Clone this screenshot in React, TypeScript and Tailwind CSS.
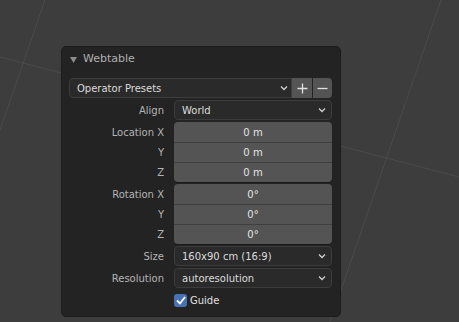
const font = { fontFamily: '"DejaVu Sans", "Liberation Sans", sans-serif' };

function Chevron() {
  return (
    <svg width="8" height="6" viewBox="0 0 8 6" className="shrink-0">
      <path d="M1 1.5 L4 4.5 L7 1.5" fill="none" stroke="#d0d0d0" strokeWidth="1.3" />
    </svg>
  );
}

function Select({ value }: { value: string }) {
  return (
    <div className="flex h-[20px] w-full items-center justify-between rounded-[4px] border border-[#3c3c3c] bg-[#2a2a2a] pl-[7px] pr-[5px] text-[#dcdcdc]">
      <span>{value}</span>
      <Chevron />
    </div>
  );
}

function Row({ label, children }: { label: string; children: React.ReactNode }) {
  return (
    <div className="flex h-[20px] items-center">
      <div className="w-[96px] shrink-0 pr-[1px] text-right text-[#b4b4b4]">{label}</div>
      <div className="ml-[9px] flex-1">{children}</div>
    </div>
  );
}

function NumberBlock({ label, values }: { label: string; values: string[] }) {
  const axes = [label, "Y", "Z"];
  return (
    <div className="flex">
      <div className="w-[96px] shrink-0 pr-[1px] text-right text-[#b4b4b4]">
        {axes.map((a) => (
          <div key={a} className="flex h-[20px] items-center justify-end">
            {a}
          </div>
        ))}
      </div>
      <div className="ml-[9px] flex-1 overflow-hidden rounded-[4px] bg-[#545454] shadow-[0_1px_0_#1a1a1a]">
        {values.map((v, i) => (
          <div
            key={i}
            className={`flex h-[20px] items-center justify-center text-[#e4e4e4] ${i > 0 ? "border-t border-[#3f3f3f]" : ""}`}
          >
            {v}
          </div>
        ))}
      </div>
    </div>
  );
}

export default function App() {
  return (
    <div className="relative h-[322px] w-[459px] overflow-hidden bg-[#3d3d3d] text-[10px]" style={font}>
      {/* viewport grid */}
      <svg className="absolute inset-0" width="459" height="322">
        <line x1="45" y1="0" x2="0" y2="130" stroke="#4b4b4b" strokeWidth="1" />
        <line x1="0" y1="57" x2="459" y2="177" stroke="#4b4b4b" strokeWidth="1" />
        <line x1="441" y1="0" x2="330" y2="322" stroke="#4b4b4b" strokeWidth="1" />
      </svg>

      <div className="absolute left-[61px] top-[46px] flex h-[271px] w-[280px] flex-col rounded-[5px] border border-[#1c1c1c] bg-[#232323] pl-[7px] pr-[8px]">
        <div className="flex h-[25px] items-center">
          <svg width="7" height="6" viewBox="0 0 7 6" className="ml-[1px]">
            <path d="M0 0 L7 0 L3.5 6 Z" fill="#8c8c8c" />
          </svg>
          <span className="ml-[6px] text-[11px] text-[#b0b0b0]">Webtable</span>
        </div>

        <div className="mt-[6px] flex h-[20px]">
          <div className="flex flex-1 items-center justify-between rounded-l-[4px] border border-[#3c3c3c] bg-[#2a2a2a] pl-[7px] pr-[3px] text-[#dcdcdc]">
            <span>Operator Presets</span>
            <Chevron />
          </div>
          <div className="flex w-[20px] items-center justify-center bg-[#545454]">
            <svg width="11" height="11" viewBox="0 0 11 11">
              <path d="M5.5 0.5 V10.5 M0.5 5.5 H10.5" stroke="#e0e0e0" strokeWidth="1.3" />
            </svg>
          </div>
          <div className="ml-[1px] flex w-[19px] items-center justify-center rounded-r-[4px] bg-[#545454]">
            <svg width="11" height="11" viewBox="0 0 11 11">
              <path d="M0.5 5.5 H10.5" stroke="#e0e0e0" strokeWidth="1.3" />
            </svg>
          </div>
        </div>

        <div className="mt-[2px] flex flex-col gap-[2px]">
          <Row label="Align">
            <Select value="World" />
          </Row>
          <NumberBlock label="Location X" values={["0 m", "0 m", "0 m"]} />
          <NumberBlock label="Rotation X" values={["0°", "0°", "0°"]} />
          <Row label="Size">
            <Select value="160x90 cm (16:9)" />
          </Row>
          <Row label="Resolution">
            <Select value="autoresolution" />
          </Row>
          <Row label="">
            <div className="flex items-center">
              <div className="flex h-[13px] w-[13px] items-center justify-center rounded-[3px] bg-[#4772b3]">
                <svg width="10" height="9" viewBox="0 0 10 9">
                  <path d="M1 4.5 L4 7.5 L9 1" fill="none" stroke="#ffffff" strokeWidth="1.8" />
                </svg>
              </div>
              <span className="ml-[3px] text-[#e0e0e0]">Guide</span>
            </div>
          </Row>
        </div>
      </div>
    </div>
  );
}
